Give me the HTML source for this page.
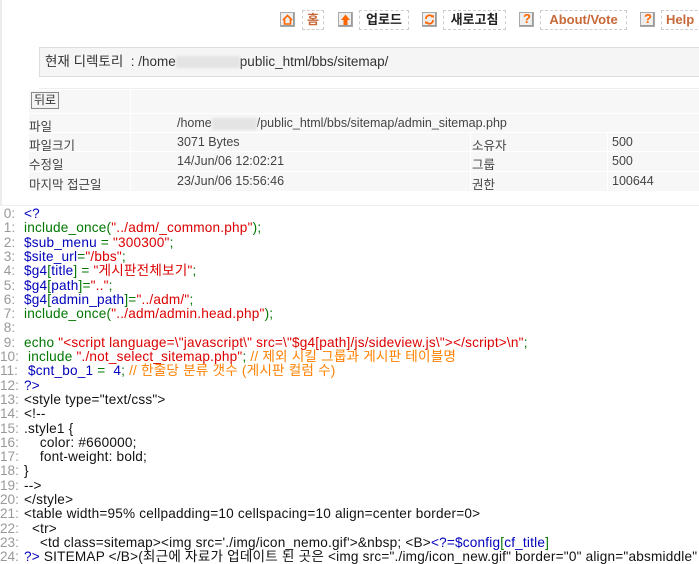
<!DOCTYPE html>
<html><head><meta charset="utf-8"><style>
body{margin:0;width:699px;height:563px;overflow:hidden;background:#fff;font-family:"Liberation Sans","Noto Sans CJK KR",sans-serif;position:relative}
.a{position:absolute}
.ic{position:absolute;top:12px;width:13px;height:13px;border:1px solid #aaa;background:#eee;box-shadow:inset -1px -1px 0 #999}
.nb{position:absolute;top:10px;height:18px;border:1px dashed #ccc;font-size:13px;font-weight:bold;line-height:18px;text-align:center;white-space:nowrap;overflow:hidden}
.o{color:#c8693a}.k{color:#222}
.tb{position:absolute;left:29px;width:670px;font-size:12.5px;color:#444}
.row{position:absolute;left:0;width:670px;background:#f7f7f7;border-top:1px solid #fff;}
.c{position:absolute;top:2px;white-space:nowrap}
.ln{position:absolute;left:0;width:699px;font-size:13.6px;letter-spacing:0.2px;white-space:pre;line-height:14px;height:14px}
.n{color:#999;display:inline-block;width:24px;letter-spacing:0}
.b{color:#0000bb}.g{color:#007700}.r{color:#dd0000}.y{color:#ff8000}.d{color:#111}
.blur{display:inline-block;width:64px;height:12px;background:#e4e4e4;filter:blur(1px);vertical-align:middle}
</style></head><body>
<div class="a" style="left:0;top:0;width:2px;height:205px;background:#ececec"></div>

<div class="ic" style="left:280px"><svg width="13" height="13"><path d="M2 7L6.5 2.5L11 7M3.5 6v5h6V6" stroke="#f60" stroke-width="1.6" fill="none"/></svg></div>
<div class="nb o" style="left:302px;width:20px">홈</div>
<div class="ic" style="left:338px"><svg width="13" height="13"><path d="M6.5 1.5L11 7H8.5v5h-4V7H2z" fill="#f60"/></svg></div>
<div class="nb k" style="left:359px;width:48px">업로드</div>
<div class="ic" style="left:422px"><svg width="13" height="13"><path d="M3 6a3.5 3.5 0 0 1 6.5-2M10 7a3.5 3.5 0 0 1-6.5 2" stroke="#f60" stroke-width="1.8" fill="none"/><path d="M8 2l3 0.5-0.5 3zM5 11l-3-.5.5-3z" fill="#f60"/></svg></div>
<div class="nb k" style="left:443px;width:61px">새로고침</div>
<div class="ic" style="left:519px"><span style="position:absolute;left:3px;top:-2px;color:#f60;font-weight:bold;font-size:13px">?</span></div>
<div class="nb o" style="left:540px;width:85px">About/Vote</div>
<div class="ic" style="left:640px"><span style="position:absolute;left:3px;top:-2px;color:#f60;font-weight:bold;font-size:13px">?</span></div>
<div class="nb o" style="left:661px;width:50px;text-align:left;padding-left:4px">Help</div>

<div class="a" style="left:39px;top:47px;width:670px;height:28px;background:#f5f5f5;border:1px solid #ddd;font-size:13.5px;color:#333;line-height:28px;padding-left:5px">현재 디렉토리 &nbsp;: /home<span class="blur"></span>public_html/bbs/sitemap/</div>

<div class="a" style="left:39px;top:88px;width:660px;height:1px;background:#eee"></div>
<div class="tb" style="top:89px">
 <div class="row" style="top:0;height:23px"><span class="c" style="left:2px;top:2px;border:1px solid #888;background:#f3f3f3;padding:0 2px;font-size:12px;line-height:15px;color:#333">뒤로</span></div>
 <div class="row" style="top:24px;height:18px"><span class="c" style="left:0">파일</span><span class="c" style="left:148px">/home<span class="blur" style="width:45px"></span>/public_html/bbs/sitemap/admin_sitemap.php</span></div>
 <div class="row" style="top:43px;height:18px"><span class="c" style="left:0">파일크기</span><span class="c" style="left:148px">3071 Bytes</span><span class="c" style="left:443px">소유자</span><span class="c" style="left:583px">500</span></div>
 <div class="row" style="top:62px;height:19px"><span class="c" style="left:0">수정일</span><span class="c" style="left:148px">14/Jun/06 12:02:21</span><span class="c" style="left:443px">그룹</span><span class="c" style="left:583px">500</span></div>
 <div class="row" style="top:82px;height:19px"><span class="c" style="left:0">마지막 접근일</span><span class="c" style="left:148px">23/Jun/06 15:56:46</span><span class="c" style="left:443px">권한</span><span class="c" style="left:583px">100644</span></div>
 <div class="a" style="left:101px;top:0;width:1px;height:101px;background:#fff"></div>
 <div class="a" style="left:441px;top:43px;width:1px;height:58px;background:#fff"></div>
 <div class="a" style="left:578px;top:43px;width:1px;height:58px;background:#fff"></div>
</div>

<div class="a" style="left:0;top:205px;width:699px;height:1px;background:#eee"></div>

<div class="ln" style="top:207px"><span class="n"> 0: </span><span class="b">&lt;?</span></div>
<div class="ln" style="top:221.3px"><span class="n"> 1: </span><span class="g">include_once(</span><span class="r">"../adm/_common.php"</span><span class="g">);</span></div>
<div class="ln" style="top:235.6px"><span class="n"> 2: </span><span class="b">$sub_menu </span><span class="g">= </span><span class="r">"300300"</span><span class="g">;</span></div>
<div class="ln" style="top:249.9px"><span class="n"> 3: </span><span class="b">$site_url</span><span class="g">=</span><span class="r">"/bbs"</span><span class="g">;</span></div>
<div class="ln" style="top:264.2px"><span class="n"> 4: </span><span class="b">$g4</span><span class="g">[</span><span class="b">title</span><span class="g">] = </span><span class="r">"게시판전체보기"</span><span class="g">;</span></div>
<div class="ln" style="top:278.5px"><span class="n"> 5: </span><span class="b">$g4</span><span class="g">[</span><span class="b">path</span><span class="g">]=</span><span class="r">".."</span><span class="g">;</span></div>
<div class="ln" style="top:292.8px"><span class="n"> 6: </span><span class="b">$g4</span><span class="g">[</span><span class="b">admin_path</span><span class="g">]=</span><span class="r">"../adm/"</span><span class="g">;</span></div>
<div class="ln" style="top:307.1px"><span class="n"> 7: </span><span class="g">include_once(</span><span class="r">"../adm/admin.head.php"</span><span class="g">);</span></div>
<div class="ln" style="top:321.4px"><span class="n"> 8: </span></div>
<div class="ln" style="top:335.7px"><span class="n"> 9: </span><span class="g">echo </span><span class="r">"&lt;script language=\"javascript\" src=\"$g4[path]/js/sideview.js\"&gt;&lt;/script&gt;\n"</span><span class="g">;</span></div>
<div class="ln" style="top:350px"><span class="n">10: </span><span class="g"> include </span><span class="r">"./not_select_sitemap.php"</span><span class="g">; </span><span class="y">// 제외 시킬 그룹과 게시판 테이블명</span></div>
<div class="ln" style="top:364.3px"><span class="n">11: </span><span class="b"> $cnt_bo_1 </span><span class="g">=  </span><span class="b">4</span><span class="g">; </span><span class="y">// 한줄당 분류 갯수 (게시판 컬럼 수)</span></div>
<div class="ln" style="top:378.6px"><span class="n">12: </span><span class="b">?&gt;</span></div>
<div class="ln d" style="top:392.9px"><span class="n">13: </span>&lt;style type="text/css"&gt;</div>
<div class="ln d" style="top:407.2px"><span class="n">14: </span>&lt;!--</div>
<div class="ln d" style="top:421.5px"><span class="n">15: </span>.style1 {</div>
<div class="ln d" style="top:435.8px"><span class="n">16: </span>    color: #660000;</div>
<div class="ln d" style="top:450.1px"><span class="n">17: </span>    font-weight: bold;</div>
<div class="ln d" style="top:464.4px"><span class="n">18: </span>}</div>
<div class="ln d" style="top:478.7px"><span class="n">19: </span>--&gt;</div>
<div class="ln d" style="top:493px"><span class="n">20: </span>&lt;/style&gt;</div>
<div class="ln d" style="top:507.3px"><span class="n">21: </span>&lt;table width=95% cellpadding=10 cellspacing=10 align=center border=0&gt;</div>
<div class="ln d" style="top:521.6px"><span class="n">22: </span>  &lt;tr&gt;</div>
<div class="ln d" style="top:535.9px"><span class="n">23: </span>    &lt;td class=sitemap&gt;&lt;img src='./img/icon_nemo.gif'&gt;&amp;nbsp; &lt;B&gt;<span class="b">&lt;?=$config</span><span class="g">[</span><span class="b">cf_title</span><span class="g">]</span></div>
<div class="ln d" style="top:550.2px"><span class="n">24: </span><span class="b">?&gt;</span> SITEMAP &lt;/B&gt;(최근에 자료가 업데이트 된 곳은 &lt;img src="./img/icon_new.gif" border="0" align="absmiddle"</div>
</body></html>
